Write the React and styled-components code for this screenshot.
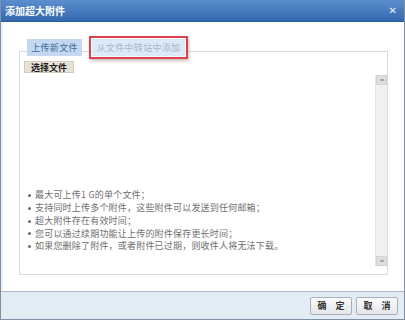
import React from "react";
import styled, { createGlobalStyle } from "styled-components";

const Global = createGlobalStyle`
  html, body { margin: 0; padding: 0; background: #ffffff; }
  body { font-family: "Noto Sans CJK SC", "Liberation Sans", sans-serif; }
  * { box-sizing: border-box; }
`;

const Dialog = styled.div`
  width: 405px;
  height: 320px;
  display: flex;
  flex-direction: column;
  border-left: 1px solid #7f8fa4;
  border-right: 1px solid #7f8fa4;
  border-bottom: 1px solid #7f8fa4;
  background: #ffffff;
`;

const TitleBar = styled.div`
  height: 22px;
  flex: none;
  display: flex;
  align-items: center;
  justify-content: space-between;
  padding: 0 7px 0 4px;
  background: linear-gradient(#5b8ecd, #3468ae);
  border-bottom: 1px solid #2b5a99;
`;

const Title = styled.span`
  color: #ffffff;
  font-size: 10px;
  font-weight: 700;
  line-height: 1;
`;

const Close = styled.span`
  color: #eef3fa;
  font-family: "DejaVu Sans", sans-serif;
  font-size: 10px;
  font-weight: 700;
  line-height: 1;
`;

const Body = styled.div`
  flex: 1;
  display: flex;
  flex-direction: column;
  padding: 17px 16px 16px 16px;
  border-left: 2px solid #edf2f7;
`;

const TabRow = styled.div`
  display: flex;
  gap: 10px;
  padding-left: 8px;
  margin-bottom: -5px;
  position: relative;
  z-index: 1;
`;

const Tab = styled.div`
  width: ${(p) => p.$width}px;
  height: 17px;
  display: flex;
  align-items: center;
  justify-content: center;
  font-size: 9px;
  letter-spacing: 0.3px;
  line-height: 1;
  background: ${(p) => (p.$active ? "#c3d8ee" : "#dce9f6")};
  color: ${(p) => (p.$active ? "#3c6aa6" : "#a7b8cc")};
  position: relative;
`;

const Highlight = styled.span`
  position: absolute;
  left: -3px;
  right: -3px;
  top: -3px;
  bottom: -3px;
  border: 2px solid #d8444c;
  box-shadow: 1px 2px 3px rgba(120, 60, 60, 0.35);
  pointer-events: none;
`;

const Panel = styled.div`
  flex: 1;
  display: flex;
  border: 1px solid #d3dbe5;
`;

const Content = styled.div`
  flex: 1;
  display: flex;
  flex-direction: column;
  align-items: flex-start;
  padding: 9px 0 21px 4px;
`;

const PickButton = styled.div`
  width: 50px;
  height: 12px;
  display: flex;
  align-items: center;
  justify-content: center;
  background: #e6e2d6;
  border: 1px solid #d2cdbf;
  color: #1d1d1d;
  font-size: 9px;
  font-weight: 600;
  line-height: 1;
`;

const Tips = styled.ul`
  margin: auto 0 0 0;
  padding: 0;
  list-style: none;
`;

const Tip = styled.li`
  display: flex;
  align-items: center;
  gap: 4px;
  padding-left: 4px;
  font-size: 9px;
  letter-spacing: 0.2px;
  line-height: 12.75px;
  color: #6e6e6e;
  &::before {
    content: "";
    width: 3px;
    height: 3px;
    border-radius: 50%;
    background: #6a6a6a;
    flex: none;
  }
`;

const ScrollBar = styled.div`
  width: 12px;
  flex: none;
  margin: 23px 0 8px 0;
  display: flex;
  flex-direction: column;
  justify-content: space-between;
  background: #f1f1f1;
  border-left: 1px solid #e4e4e4;
`;

const ScrollArrow = styled.div`
  height: 10px;
  background: #dedede;
  border: 1px solid #d2d2d2;
  display: flex;
  align-items: center;
  justify-content: center;
  &::after {
    content: "";
    width: 4px;
    height: 2px;
    background: #a8a8a8;
  }
`;

const Footer = styled.div`
  height: 28px;
  flex: none;
  display: flex;
  align-items: center;
  justify-content: flex-end;
  gap: 4px;
  padding: 0 6px 0 0;
  background: #e3ebf3;
  border-top: 1px solid #a9b7c7;
`;

const Button = styled.div`
  width: 42px;
  height: 18px;
  display: flex;
  align-items: center;
  justify-content: center;
  gap: 9px;
  background: linear-gradient(#fbfbfb, #e4e6ea);
  border: 1px solid #a6afbb;
  border-radius: 2px;
  color: #333;
  font-size: 9px;
  font-weight: 600;
  line-height: 1;
`;

const tips = [
  "最大可上传1 G的单个文件；",
  "支持同时上传多个附件，这些附件可以发送到任何邮箱；",
  "超大附件存在有效时间；",
  "您可以通过续期功能让上传的附件保存更长时间；",
  "如果您删除了附件，或者附件已过期，则收件人将无法下载。",
];

export default function App() {
  return (
    <>
      <Global />
      <Dialog>
        <TitleBar>
          <Title>添加超大附件</Title>
          <Close>✕</Close>
        </TitleBar>
        <Body>
          <TabRow>
            <Tab $active $width={55}>上传新文件</Tab>
            <Tab $width={93}>
              从文件中转站中添加
              <Highlight />
            </Tab>
          </TabRow>
          <Panel>
            <Content>
              <PickButton>选择文件</PickButton>
              <Tips>
                {tips.map((t) => (
                  <Tip key={t}>{t}</Tip>
                ))}
              </Tips>
            </Content>
            <ScrollBar>
              <ScrollArrow />
              <ScrollArrow />
            </ScrollBar>
          </Panel>
        </Body>
        <Footer>
          <Button>
            <span>确</span>
            <span>定</span>
          </Button>
          <Button>
            <span>取</span>
            <span>消</span>
          </Button>
        </Footer>
      </Dialog>
    </>
  );
}
